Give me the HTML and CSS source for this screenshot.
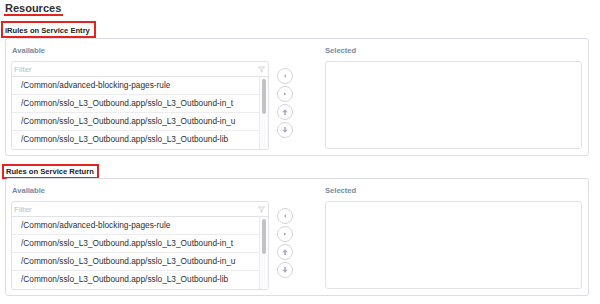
FILE: index.html
```html
<!DOCTYPE html>
<html lang="en">
  <head>
    <meta charset="UTF-8" />
    <meta name="viewport" content="width=device-width, initial-scale=1.0" />
    <title>Resources</title>
    <link rel="stylesheet" href="styles.css">
  </head>

  <body>
    <div class="page">
      <h2 class="page-title">Resources</h2>

      <!-- Service entry -->
      <section class="resource resource-entry">
        <div class="resource-title">iRules on Service Entry</div>
        <div class="panel">
          <div class="dual-list">
            <div class="list-label">Available</div>
            <div class="list-label label-selected">Selected</div>
            <div class="list-box">
              <div class="filter">
                <span>Filter</span>
                <svg class="funnel" width="7" height="7" viewBox="0 0 7 7"><path d="M0.5 1h6L4 3.6V6.2L3 5.6V3.6z" fill="none" stroke="#c6c6cc" stroke-width="0.8"/></svg>
              </div>
              <div class="list-body">
                <ul class="rows">
                  <li>/Common/advanced-blocking-pages-rule</li>
                  <li>/Common/sslo_L3_Outbound.app/sslo_L3_Outbound-in_t</li>
                  <li>/Common/sslo_L3_Outbound.app/sslo_L3_Outbound-in_u</li>
                  <li>/Common/sslo_L3_Outbound.app/sslo_L3_Outbound-lib</li>
                </ul>
                <div class="scrollbar"><div class="thumb"></div></div>
              </div>
            </div>
            <div class="mover">
              <button class="move-btn"><svg width="8" height="8" viewBox="0 0 8 8"><path d="M5 2.3v3.4L2.8 4z" fill="#a9abc4"/></svg></button>
              <button class="move-btn"><svg width="8" height="8" viewBox="0 0 8 8"><path d="M3 2.3v3.4L5.2 4z" fill="#a9abc4"/></svg></button>
              <button class="move-btn"><svg width="8" height="8" viewBox="0 0 8 8"><path d="M4 1.2L1.3 4.2h1.9V7h1.6V4.2h1.9z" fill="#a9abc4"/></svg></button>
              <button class="move-btn"><svg width="8" height="8" viewBox="0 0 8 8"><path d="M4 6.8L1.3 3.8h1.9V1h1.6v2.8h1.9z" fill="#a9abc4"/></svg></button>
            </div>
            <div class="selected-box"></div>
          </div>
        </div>
      </section>

      <!-- Service return -->
      <section class="resource resource-return">
        <div class="resource-title">Rules on Service Return</div>
        <div class="panel">
          <div class="dual-list">
            <div class="list-label">Available</div>
            <div class="list-label label-selected">Selected</div>
            <div class="list-box">
              <div class="filter">
                <span>Filter</span>
                <svg class="funnel" width="7" height="7" viewBox="0 0 7 7"><path d="M0.5 1h6L4 3.6V6.2L3 5.6V3.6z" fill="none" stroke="#c6c6cc" stroke-width="0.8"/></svg>
              </div>
              <div class="list-body">
                <ul class="rows">
                  <li>/Common/advanced-blocking-pages-rule</li>
                  <li>/Common/sslo_L3_Outbound.app/sslo_L3_Outbound-in_t</li>
                  <li>/Common/sslo_L3_Outbound.app/sslo_L3_Outbound-in_u</li>
                  <li>/Common/sslo_L3_Outbound.app/sslo_L3_Outbound-lib</li>
                </ul>
                <div class="scrollbar"><div class="thumb"></div></div>
              </div>
            </div>
            <div class="mover">
              <button class="move-btn"><svg width="8" height="8" viewBox="0 0 8 8"><path d="M5 2.3v3.4L2.8 4z" fill="#a9abc4"/></svg></button>
              <button class="move-btn"><svg width="8" height="8" viewBox="0 0 8 8"><path d="M3 2.3v3.4L5.2 4z" fill="#a9abc4"/></svg></button>
              <button class="move-btn"><svg width="8" height="8" viewBox="0 0 8 8"><path d="M4 1.2L1.3 4.2h1.9V7h1.6V4.2h1.9z" fill="#a9abc4"/></svg></button>
              <button class="move-btn"><svg width="8" height="8" viewBox="0 0 8 8"><path d="M4 6.8L1.3 3.8h1.9V1h1.6v2.8h1.9z" fill="#a9abc4"/></svg></button>
            </div>
            <div class="selected-box"></div>
          </div>
        </div>
      </section>
    </div>
  </body>
</html>
```

FILE: styles.css
```css
body {
  margin: 0;
  background: #fff;
  font-family: "Liberation Sans", Arial, sans-serif;
  color: #333;
}

.page {
  padding: 2px 11px 0 5px;
}

.page-title {
  width: fit-content;
  margin: 0 0 5px -1px;
  padding: 0 2px 0 1px;
  font-size: 11px;
  line-height: 12px;
  font-weight: bold;
  color: #2e2e2e;
  border-bottom: 2px solid #e4251d;
}

.resource-title {
  width: fit-content;
  margin-left: -4px;
  padding: 0 4px 0 2px;
  font-size: 7.6px;
  font-weight: bold;
  color: #222;
  border: 2px solid #e4251d;
}

.resource-entry .resource-title {
  height: 13px;
  line-height: 15px;
}

.resource-return {
  margin-top: 8px;
}

.resource-return .resource-title {
  margin-left: -3px;
  height: 11px;
  line-height: 12px;
  padding-right: 3px;
}

.panel {
  border: 1px solid #dcdde7;
  border-radius: 3px;
  padding: 7px 6px 5px 5px;
}

.resource-return .panel {
  margin-top: -1px;
}

.dual-list {
  display: grid;
  grid-template-columns: 258px 56px 257px;
  grid-template-rows: 10px auto;
  row-gap: 5px;
}

.list-label {
  font-size: 7.6px;
  line-height: 10px;
  font-weight: bold;
  color: #7889a3;
  padding-left: 1px;
}

.label-selected {
  grid-column: 3;
  padding-left: 0;
}

.list-box {
  border: 1px solid #e1e2e8;
  border-radius: 3px;
  overflow: hidden;
}

.filter {
  display: flex;
  align-items: center;
  justify-content: space-between;
  height: 14px;
  padding: 0 3px 0 2px;
  border-bottom: 1px solid #e1e2e8;
  font-size: 8px;
  color: #bdbdc2;
}

.funnel {
  display: block;
}

.list-body {
  display: flex;
  height: 72px;
}

.rows {
  flex: 1;
  margin: 0;
  padding: 0;
  list-style: none;
  overflow: hidden;
}

.rows li {
  height: 17px;
  line-height: 17px;
  padding-left: 9px;
  border-bottom: 1px solid #ececef;
  font-size: 8.3px;
  color: #2e2e2e;
  white-space: nowrap;
}

.rows li:last-child {
  border-bottom: none;
}

.scrollbar {
  width: 8px;
  border-left: 1px solid #ececef;
  background: #fbfbfb;
  padding-top: 2px;
}

.thumb {
  width: 4px;
  height: 35px;
  margin-left: 2px;
  border-radius: 3px;
  background: #c3c3c3;
}

.mover {
  display: flex;
  flex-direction: column;
  gap: 2px;
  padding: 7px 0 0 8px;
}

.move-btn {
  display: flex;
  align-items: center;
  justify-content: center;
  width: 16px;
  height: 16px;
  padding: 0;
  border: 1px solid #d3d4e2;
  border-radius: 50%;
  background: #fff;
}

.selected-box {
  border: 1px solid #e1e2e8;
  border-radius: 3px;
  height: 86px;
}
```
